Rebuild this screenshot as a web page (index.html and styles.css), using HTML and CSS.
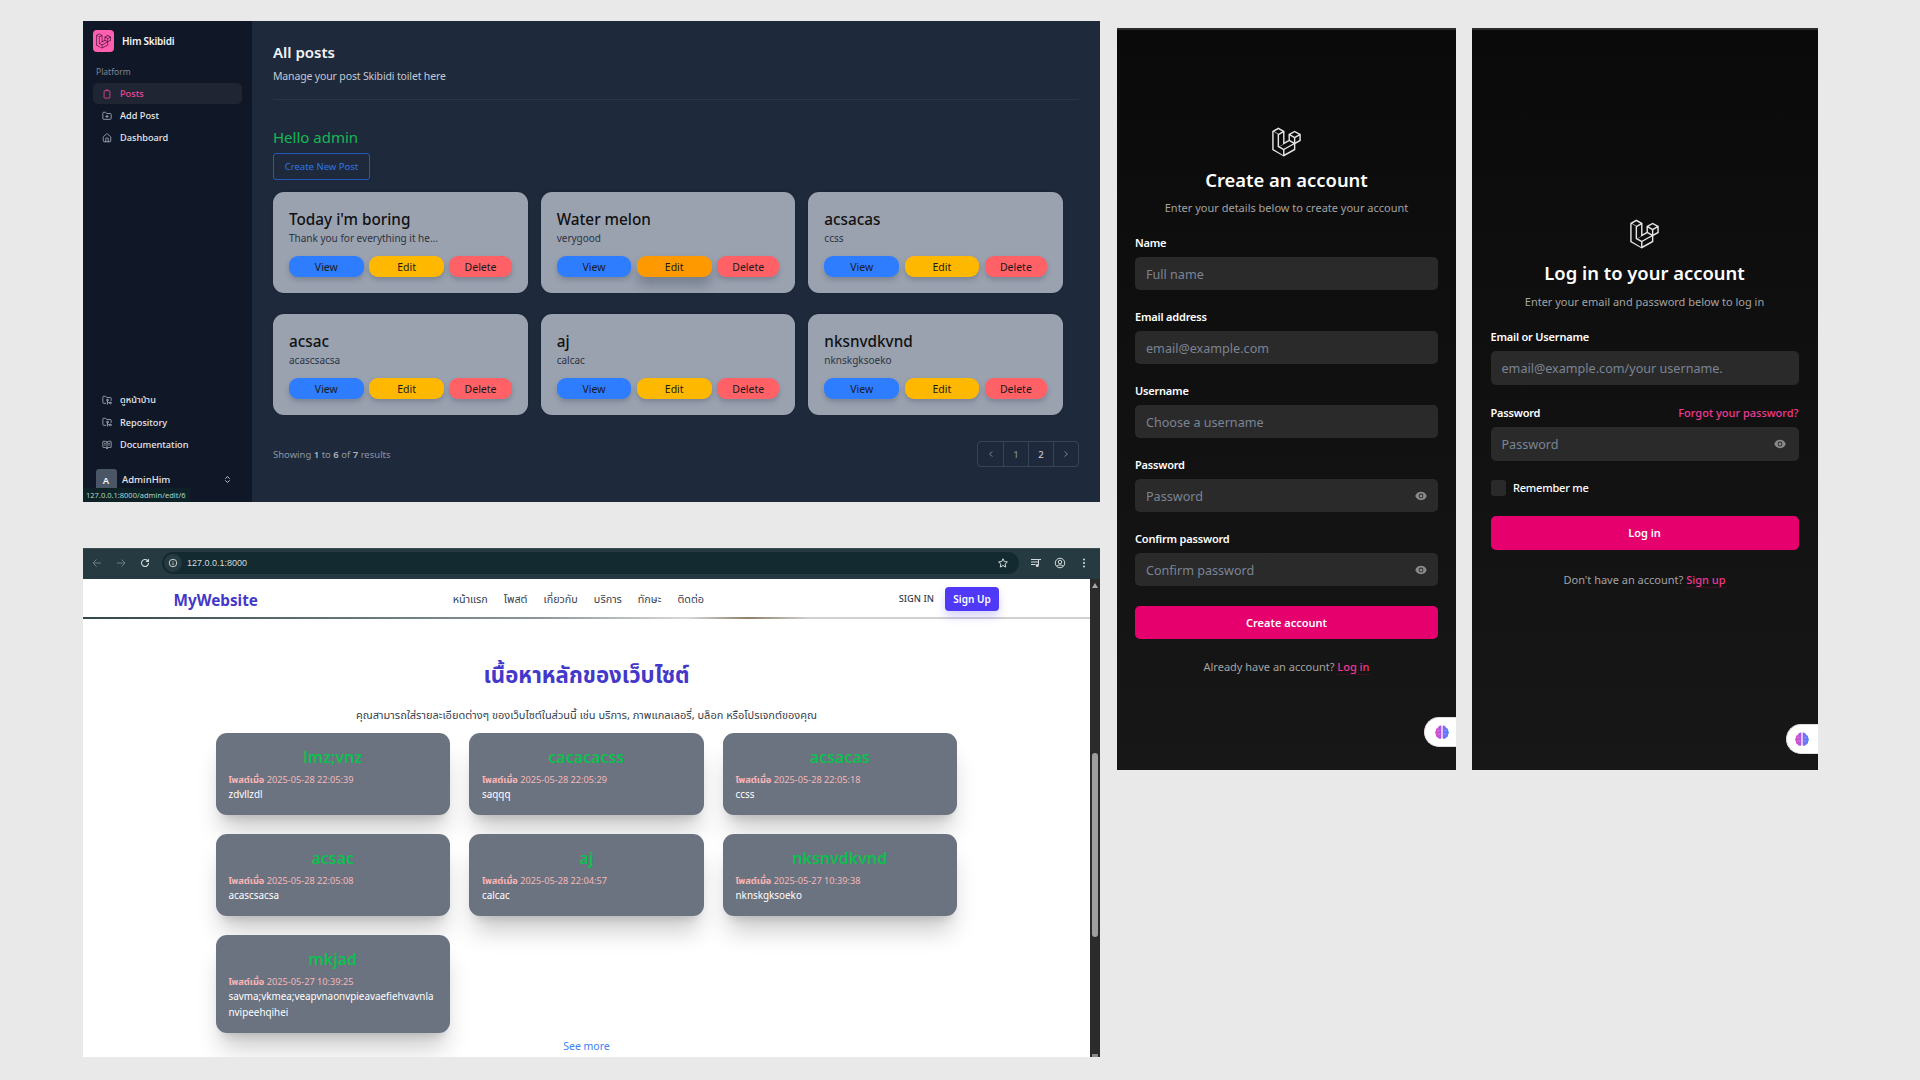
FILE: index.html
```html
<!DOCTYPE html>
<html lang="en">
<head>
<meta charset="utf-8">
<title>Project screenshots</title>
<link rel="stylesheet" href="styles.css">
</head>
<body>
<svg class="defs" aria-hidden="true">
  <symbol id="laravel" viewBox="0 0 40 42"><path fill="currentColor" fill-rule="evenodd" d="M17.2 5.633 8.6.855 0 5.633v26.51l16.2 9 16.2-9v-8.442l7.6-4.223V9.856l-8.6-4.777-8.6 4.777V18.3l-5.6 3.11V5.633ZM38 18.301l-5.6 3.11v-6.157l5.6-3.11V18.3Zm-1.06-7.856-5.54 3.078-5.54-3.079 5.54-3.078 5.54 3.079ZM24.8 18.3v-6.157l5.6 3.111v6.158L24.8 18.3Zm-1 1.732 5.54 3.078-13.14 7.302-5.54-3.078 13.14-7.3v-.002Zm-16.2 7.89 7.6 4.222V39.3L2 31v-24.2l5.6 3.111v18.011ZM8.6 9.3 3.06 6.222 8.6 3.143l5.54 3.08L8.6 9.3Zm1 1.732 5.6-3.111v16.1l-5.6 3.111V11.032ZM30.4 30.96l-13.2 7.34v-6.3l13.2-7.34v6.3Z"/></symbol>
  <symbol id="eye" viewBox="0 0 20 20"><path fill="currentColor" d="M10 12.5a2.5 2.5 0 1 0 0-5 2.5 2.5 0 0 0 0 5Z"/><path fill="currentColor" fill-rule="evenodd" d="M.664 10.59a1.651 1.651 0 0 1 0-1.186A10.004 10.004 0 0 1 10 3c4.257 0 7.893 2.66 9.336 6.41.147.381.146.804 0 1.186A10.004 10.004 0 0 1 10 17c-4.257 0-7.893-2.66-9.336-6.41ZM14 10a4 4 0 1 1-8 0 4 4 0 0 1 8 0Z"/></symbol>
  <symbol id="brain" viewBox="0 0 20 20"><defs><linearGradient id="brainfill" x1="0" y1="0" x2="1" y2="0"><stop offset="0" stop-color="#e84fc0"/><stop offset=".5" stop-color="#9a5cf0"/><stop offset="1" stop-color="#3f8cff"/></linearGradient></defs><path fill="url(#brainfill)" d="M9.2 2.2v15.6c-1.3 1.2-3.6.8-4.3-.9-1.8-.1-2.9-1.9-2.3-3.5C1 12.300 1 9.800 2.300 8.800 1.800 6.800 3 5 4.800 4.900 5.400 2.800 7.800 1.500 9.200 2.200ZM10.800 2.200c1.400-.7 3.800.6 4.400 2.700 1.800.1 3 1.900 2.500 3.900 1.300 1 1.300 3.500-.3 4.600.6 1.600-.5 3.400-2.300 3.500-.7 1.700-3 2.100-4.300.9Z"/><path d="M4.500 8h2.500M13 8h2.500M5 12.500h2.500M12.500 12.500H15" stroke="#fff" stroke-opacity=".45" stroke-width=".8" fill="none"/></symbol>
  <symbol id="i-posts" viewBox="0 0 24 24"><rect x="5" y="4" width="14" height="18" rx="2.500" fill="none" stroke="currentColor" stroke-width="2"/><path d="M9 2.500h6" fill="none" stroke="currentColor" stroke-width="2"/></symbol>
  <symbol id="i-add" viewBox="0 0 24 24"><g fill="none" stroke="currentColor" stroke-width="2" stroke-linecap="round" stroke-linejoin="round"><path d="M12 10v6"/><path d="M9 13h6"/><path d="M20 20a2 2 0 0 0 2-2V8a2 2 0 0 0-2-2h-7.900a2 2 0 0 1-1.690-.9L9.600 3.900A2 2 0 0 0 7.930 3H4a2 2 0 0 0-2 2v13a2 2 0 0 0 2 2Z"/></g></symbol>
  <symbol id="i-home" viewBox="0 0 24 24"><g fill="none" stroke="currentColor" stroke-width="2" stroke-linecap="round" stroke-linejoin="round"><path d="M15 21v-8a1 1 0 0 0-1-1h-4a1 1 0 0 0-1 1v8"/><path d="M3 10a2 2 0 0 1 .709-1.528l7-5.999a2 2 0 0 1 2.582 0l7 5.999A2 2 0 0 1 21 10v9a2 2 0 0 1-2 2H5a2 2 0 0 1-2-2z"/></g></symbol>
  <symbol id="i-repo" viewBox="0 0 24 24"><g fill="none" stroke="currentColor" stroke-width="2" stroke-linecap="round" stroke-linejoin="round"><path d="M9 20H4a2 2 0 0 1-2-2V5a2 2 0 0 1 2-2h3.900a2 2 0 0 1 1.690.9l.81 1.200a2 2 0 0 0 1.670.9H20a2 2 0 0 1 2 2v5"/><circle cx="13" cy="12" r="2"/><path d="M18 19c-2.800 0-5-2.200-5-5v8"/><circle cx="20" cy="19" r="2"/></g></symbol>
  <symbol id="i-book" viewBox="0 0 24 24"><g fill="none" stroke="currentColor" stroke-width="2" stroke-linecap="round" stroke-linejoin="round"><path d="M12 7v14"/><path d="M16 12h2"/><path d="M16 8h2"/><path d="M3 18a1 1 0 0 1-1-1V4a1 1 0 0 1 1-1h5a4 4 0 0 1 4 4 4 4 0 0 1 4-4h5a1 1 0 0 1 1 1v13a1 1 0 0 1-1 1h-6a3 3 0 0 0-3 3 3 3 0 0 0-3-3z"/><path d="M6 12h2"/><path d="M6 8h2"/></g></symbol>
  <symbol id="i-updown" viewBox="0 0 24 24"><g fill="none" stroke="currentColor" stroke-width="2.500" stroke-linecap="round" stroke-linejoin="round"><path d="m7 15 5 5 5-5"/><path d="m7 9 5-5 5 5"/></g></symbol>
  <symbol id="i-left" viewBox="0 0 24 24"><path d="M15 5l-7 7 7 7" fill="none" stroke="currentColor" stroke-width="3" stroke-linecap="round" stroke-linejoin="round"/></symbol>
  <symbol id="i-right" viewBox="0 0 24 24"><path d="M9 5l7 7-7 7" fill="none" stroke="currentColor" stroke-width="3" stroke-linecap="round" stroke-linejoin="round"/></symbol>
  <symbol id="c-back" viewBox="0 0 24 24"><path d="M20 12H5m6-7-7 7 7 7" fill="none" stroke="currentColor" stroke-width="2"/></symbol>
  <symbol id="c-fwd" viewBox="0 0 24 24"><path d="M4 12h15m-6-7 7 7-7 7" fill="none" stroke="currentColor" stroke-width="2"/></symbol>
  <symbol id="c-reload" viewBox="0 0 24 24"><path d="M19 12a7 7 0 1 1-2.100-5L19 9" fill="none" stroke="currentColor" stroke-width="2.200"/><path d="M20 3v7h-7z" fill="currentColor"/></symbol>
  <symbol id="c-info" viewBox="0 0 24 24"><circle cx="12" cy="12" r="9" fill="none" stroke="currentColor" stroke-width="2.200"/><path d="M12 11v6M12 7v2" fill="none" stroke="currentColor" stroke-width="2.200"/></symbol>
  <symbol id="c-star" viewBox="0 0 24 24"><path d="m12 3.500 2.600 5.700 6.200.7-4.600 4.200 1.300 6.100-5.500-3.100-5.500 3.100 1.300-6.100-4.600-4.200 6.200-.7Z" fill="none" stroke="currentColor" stroke-width="2" stroke-linejoin="round"/></symbol>
  <symbol id="c-queue" viewBox="0 0 24 24"><path d="M2 5h15M2 10h15M2 15h9M17 5h5M17 5v11" fill="none" stroke="currentColor" stroke-width="2"/><circle cx="14.500" cy="17" r="3" fill="currentColor"/></symbol>
  <symbol id="c-user" viewBox="0 0 24 24"><circle cx="12" cy="12" r="9.500" fill="none" stroke="currentColor" stroke-width="2"/><circle cx="12" cy="10" r="3.500" fill="none" stroke="currentColor" stroke-width="2"/><path d="M5.500 18.500c3-3.500 10-3.500 13 0" fill="none" stroke="currentColor" stroke-width="2"/></symbol>
  <symbol id="c-dots" viewBox="0 0 24 24"><circle cx="12" cy="5" r="2" fill="currentColor"/><circle cx="12" cy="12" r="2" fill="currentColor"/><circle cx="12" cy="19" r="2" fill="currentColor"/></symbol>
</svg>

<section class="window admin">
  <aside class="sidebar">
    <div class="brand">
      <span class="brand-mark"><svg class="brand-logo"><use href="#laravel"/></svg></span>
      <span class="brand-name">Him Skibidi</span>
    </div>
    <div class="side-label">Platform</div>
    <nav class="side-nav">
      <a class="side-item active"><svg class="side-icon"><use href="#i-posts"/></svg>Posts</a>
      <a class="side-item"><svg class="side-icon"><use href="#i-add"/></svg>Add Post</a>
      <a class="side-item"><svg class="side-icon"><use href="#i-home"/></svg>Dashboard</a>
    </nav>
    <nav class="side-nav side-bottom">
      <a class="side-item"><svg class="side-icon"><use href="#i-repo"/></svg>ดูหน้าบ้าน</a>
      <a class="side-item"><svg class="side-icon"><use href="#i-repo"/></svg>Repository</a>
      <a class="side-item"><svg class="side-icon"><use href="#i-book"/></svg>Documentation</a>
    </nav>
    <div class="side-user">
      <span class="avatar">A</span>
      <span class="user-name">AdminHim</span>
      <svg class="user-chev"><use href="#i-updown"/></svg>
    </div>
  </aside>
  <main class="admin-main">
    <h1 class="admin-title">All posts</h1>
    <p class="admin-sub">Manage your post Skibidi toilet here</p>
    <hr class="admin-rule">
    <div class="hello">Hello admin</div>
    <a class="create-btn">Create New Post</a>
    <div class="post-grid">
      <article class="post-card"><h2>Today i'm boring</h2><p>Thank you for everything it he...</p><div class="post-actions"><a class="btn view">View</a><a class="btn edit">Edit</a><a class="btn del">Delete</a></div></article>
      <article class="post-card"><h2>Water melon</h2><p>verygood</p><div class="post-actions"><a class="btn view">View</a><a class="btn edit hovered">Edit</a><a class="btn del">Delete</a></div></article>
      <article class="post-card"><h2>acsacas</h2><p>ccss</p><div class="post-actions"><a class="btn view">View</a><a class="btn edit">Edit</a><a class="btn del">Delete</a></div></article>
      <article class="post-card"><h2>acsac</h2><p>acascsacsa</p><div class="post-actions"><a class="btn view">View</a><a class="btn edit">Edit</a><a class="btn del">Delete</a></div></article>
      <article class="post-card"><h2>aj</h2><p>calcac</p><div class="post-actions"><a class="btn view">View</a><a class="btn edit">Edit</a><a class="btn del">Delete</a></div></article>
      <article class="post-card"><h2>nksnvdkvnd</h2><p>nknskgksoeko</p><div class="post-actions"><a class="btn view">View</a><a class="btn edit">Edit</a><a class="btn del">Delete</a></div></article>
    </div>
    <div class="pager-row">
      <span class="results">Showing <b>1</b> to <b>6</b> of <b>7</b> results</span>
      <div class="pager">
        <span class="page-cell"><svg class="page-arrow"><use href="#i-left"/></svg></span>
        <span class="page-cell">1</span>
        <span class="page-cell current">2</span>
        <span class="page-cell"><svg class="page-arrow"><use href="#i-right"/></svg></span>
      </div>
    </div>
  </main>
  <div class="status-bar">127.0.0.1:8000/admin/edit/6</div>
</section>

<section class="window browser">
  <header class="chrome">
    <svg class="chrome-icon dim"><use href="#c-back"/></svg>
    <svg class="chrome-icon dim"><use href="#c-fwd"/></svg>
    <svg class="chrome-icon"><use href="#c-reload"/></svg>
    <div class="omnibox">
      <span class="site-info"><svg class="info-icon"><use href="#c-info"/></svg></span>
      <span class="url">127.0.0.1:8000</span>
      <svg class="chrome-icon star"><use href="#c-star"/></svg>
    </div>
    <svg class="chrome-icon"><use href="#c-queue"/></svg>
    <svg class="chrome-icon"><use href="#c-user"/></svg>
    <svg class="chrome-icon"><use href="#c-dots"/></svg>
  </header>
  <div class="viewport">
    <div class="site">
      <nav class="site-nav">
        <a class="site-logo">MyWebsite</a>
        <div class="site-links"><a>หน้าแรก</a><a>โพสต์</a><a>เกี่ยวกับ</a><a>บริการ</a><a>ทักษะ</a><a>ติดต่อ</a></div>
        <div class="site-auth"><a class="signin">SIGN IN</a><a class="signup">Sign Up</a></div>
      </nav>
      <div class="site-main">
        <h1 class="site-title">เนื้อหาหลักของเว็บไซต์</h1>
        <p class="site-sub">คุณสามารถใส่รายละเอียดต่างๆ ของเว็บไซต์ในส่วนนี้ เช่น บริการ, ภาพแกลเลอรี่, บล็อก หรือโปรเจกต์ของคุณ</p>
        <div class="feed">
          <article class="feed-card"><h2>lmz;vnz</h2><div class="meta"><b>โพสต์เมื่อ</b> 2025-05-28 22:05:39</div><p>zdvllzdl</p></article>
          <article class="feed-card"><h2>cacacacss</h2><div class="meta"><b>โพสต์เมื่อ</b> 2025-05-28 22:05:29</div><p>saqqq</p></article>
          <article class="feed-card"><h2>acsacas</h2><div class="meta"><b>โพสต์เมื่อ</b> 2025-05-28 22:05:18</div><p>ccss</p></article>
          <article class="feed-card"><h2>acsac</h2><div class="meta"><b>โพสต์เมื่อ</b> 2025-05-28 22:05:08</div><p>acascsacsa</p></article>
          <article class="feed-card"><h2>aj</h2><div class="meta"><b>โพสต์เมื่อ</b> 2025-05-28 22:04:57</div><p>calcac</p></article>
          <article class="feed-card"><h2>nksnvdkvnd</h2><div class="meta"><b>โพสต์เมื่อ</b> 2025-05-27 10:39:38</div><p>nknskgksoeko</p></article>
          <article class="feed-card"><h2>mkjad</h2><div class="meta"><b>โพสต์เมื่อ</b> 2025-05-27 10:39:25</div><p>savma;vkmea;veapvnaonvpieavaefiehvavnlanvipeehqihei</p></article>
        </div>
        <a class="see-more">See more</a>
      </div>
    </div>
    <div class="scrollbar">
      <span class="scroll-up"></span>
      <span class="scroll-thumb"></span>
      <span class="scroll-down"></span>
    </div>
  </div>
</section>

<section class="window auth register">
  <svg class="auth-logo"><use href="#laravel"/></svg>
  <h1 class="auth-title">Create an account</h1>
  <p class="auth-sub">Enter your details below to create your account</p>
  <div class="auth-form">
    <div class="field"><span class="field-label">Name</span><div class="field-input">Full name</div></div>
    <div class="field"><span class="field-label">Email address</span><div class="field-input">email@example.com</div></div>
    <div class="field"><span class="field-label">Username</span><div class="field-input">Choose a username</div></div>
    <div class="field"><span class="field-label">Password</span><div class="field-input">Password<svg class="eye"><use href="#eye"/></svg></div></div>
    <div class="field"><span class="field-label">Confirm password</span><div class="field-input">Confirm password<svg class="eye"><use href="#eye"/></svg></div></div>
    <a class="auth-btn">Create account</a>
  </div>
  <p class="auth-alt">Already have an account? <a>Log in</a></p>
  <span class="brain-tab"><svg class="brain"><use href="#brain"/></svg></span>
</section>

<section class="window auth login">
  <svg class="auth-logo"><use href="#laravel"/></svg>
  <h1 class="auth-title">Log in to your account</h1>
  <p class="auth-sub">Enter your email and password below to log in</p>
  <div class="auth-form">
    <div class="field"><span class="field-label">Email or Username</span><div class="field-input">email@example.com/your username.</div></div>
    <div class="field"><div class="field-head"><span class="field-label">Password</span><a class="forgot">Forgot your password?</a></div><div class="field-input">Password<svg class="eye"><use href="#eye"/></svg></div></div>
    <label class="remember"><span class="check"></span>Remember me</label>
    <a class="auth-btn">Log in</a>
  </div>
  <p class="auth-alt">Don't have an account? <a>Sign up</a></p>
  <span class="brain-tab"><svg class="brain"><use href="#brain"/></svg></span>
</section>
</body>
</html>
```

FILE: styles.css
```css
* { box-sizing: border-box; }
html, body { margin: 0; height: 100%; }
body {
  position: relative;
  width: 1920px;
  height: 1080px;
  overflow: hidden;
  background: #e9e9e9;
  font-family: "Noto Sans", "Noto Sans Thai", "Open Sans", sans-serif;
}
h1, h2, p { margin: 0; }
.defs { position: absolute; width: 0; height: 0; }

/* free canvas of four screenshots */
.window { position: absolute; overflow: hidden; }
.admin { left: 83px; top: 21px; width: 1017px; height: 481px; display: flex; background: #1e293b; }
.browser { left: 83px; top: 548px; width: 1017px; height: 509px; display: flex; flex-direction: column; background: #fff; }
.register { left: 1117px; top: 28px; width: 339px; height: 742px; padding: 97px 18px 0; }
.login { left: 1472px; top: 28px; width: 346px; height: 742px; padding: 189px 19.500px 0 18.500px; }

/* admin sidebar */
.sidebar { width: 168.500px; flex: none; display: flex; flex-direction: column; padding: 9px 10px 0; background: #101828; }
.brand { display: flex; align-items: center; gap: 8px; height: 22px; }
.brand-mark { width: 21px; height: 22px; border-radius: 4px; background: #ff5fb1; display: flex; align-items: center; justify-content: center; color: #5b1a45; }
.brand-logo { width: 15px; height: 16px; }
.brand-name { font-size: 10px; font-weight: 600; letter-spacing: -.25px; color: #f3f4f6; }
.side-label { margin: 13px 0 4px 3px; height: 14px; line-height: 14px; font-size: 8.500px; color: #7c8594; }
.side-nav { display: flex; flex-direction: column; gap: 1px; }
.side-item { height: 21px; display: flex; align-items: center; gap: 8px; padding-left: 9px; border-radius: 5px; font-size: 9.200px; font-weight: 500; color: #e5e7eb; }
.side-item.active { background: #1f2533; color: #ec4899; }
.side-icon { width: 10px; height: 10px; flex: none; color: #aab0ba; }
.active .side-icon { color: #ec4899; }
.side-bottom { margin-top: auto; gap: 1.500px; }
.side-user { margin-top: 14px; height: 33px; flex: none; display: flex; align-items: flex-start; padding-left: 2.500px; }
.avatar { width: 21px; height: 22px; border-radius: 3px; background: #4a5565; color: #f3f4f6; font-size: 9.500px; font-weight: 600; display: flex; align-items: center; justify-content: center; }
.user-name { margin-left: 5.500px; line-height: 22px; font-size: 9.500px; font-weight: 500; color: #e5e7eb; }
.user-chev { width: 9px; height: 9px; margin: 6px 9.500px 0 auto; color: #cbd0d8; }
.status-bar { position: absolute; left: 0; bottom: 0; width: 106.500px; height: 14px; padding-left: 3px; background: #0d2127; color: #a9d8cf; font-size: 7.500px; line-height: 14px; white-space: nowrap; }

/* admin main */
.admin-main { flex: 1; min-width: 0; padding: 20px 21px 0 21.500px; }
.admin-title { font-size: 15px; line-height: 22px; font-weight: 600; color: #f3f4f6; }
.admin-sub { margin-top: 5px; font-size: 10.500px; line-height: 16px; letter-spacing: -.15px; color: #c3c9d3; }
.admin-rule { margin: 15px 0 0; border: 0; border-top: 1px solid #2b3749; }
.hello { margin-top: 26px; font-size: 15px; line-height: 22px; color: #14b855; }
.create-btn { display: inline-flex; align-items: center; justify-content: center; margin-top: 5px; width: 97px; height: 27px; border: 1px solid #2459b8; border-radius: 3px; color: #2f74e8; font-size: 9.500px; }
.post-grid { margin-top: 12px; padding-right: 16px; display: grid; grid-template-columns: repeat(3, 1fr); gap: 21px 13px; }
.post-card { height: 101px; padding: 16px 16px 16px; border-radius: 11px; background: #9aa2b0; box-shadow: 0 -1px 3px rgba(0,0,0,.12); }
.post-card h2 { margin-bottom: 1px; font-size: 15.300px; line-height: 22px; font-weight: 500; color: #111; }
.post-card p { margin-bottom: 11px; font-size: 10px; line-height: 14px; color: #2d3340; }
.post-actions { display: grid; grid-template-columns: 1.200fr 1.200fr 1fr; gap: 5.500px; }
.btn { height: 21px; display: flex; align-items: center; justify-content: center; border-radius: 9px; font-size: 10.500px; color: #1a1a1a; box-shadow: 0 3px 5px rgba(40,50,70,.25); }
.view { background: #2e7dff; }
.edit { background: #ffb800; }
.del { background: #ff6166; }
.edit.hovered { background: #ff9900; box-shadow: 0 8px 12px rgba(40,50,70,.3); }
.pager-row { margin-top: 26px; display: flex; align-items: center; justify-content: space-between; }
.results { font-size: 9.500px; color: #8d96a5; }
.results b { font-weight: 600; color: #aab2be; }
.pager { display: flex; height: 26px; border: 1px solid #36445a; border-radius: 4px; }
.page-cell { width: 25px; display: flex; align-items: center; justify-content: center; border-left: 1px solid #36445a; font-size: 9.500px; font-weight: 500; color: #7e899a; }
.page-cell:first-child { border-left: 0; }
.page-cell.current { color: #c7ced8; }
.page-arrow { width: 8px; height: 8px; }

/* browser chrome */
.chrome { height: 31px; flex: none; display: flex; align-items: center; padding: 0 4px 2px 2px; background: #263b41; border-top: 1px solid #3d4c50; color: #d5dbdc; }
.chrome-icon { width: 12px; height: 12px; flex: none; margin: 0 6px; }
.chrome-icon.dim { color: #6d7d81; }
.omnibox { flex: 1; height: 22px; margin: 0 5px 0 5px; display: flex; align-items: center; padding-left: 2px; border-radius: 11px; background: #132a30; }
.site-info { width: 18px; height: 18px; border-radius: 50%; background: #263b41; display: flex; align-items: center; justify-content: center; }
.info-icon { width: 10px; height: 10px; }
.url { margin-left: 5px; font-family: "Liberation Sans", sans-serif; font-size: 9px; color: #d5dbdc; }
.star { margin-left: auto; margin-right: 10px; }

.viewport { flex: 1; min-height: 0; display: flex; overflow: hidden; }
.site { flex: 1; min-width: 0; }
.site-nav { height: 40px; display: flex; align-items: center; justify-content: space-between; padding: 3px 91px 0 90.500px; border-bottom: 2px solid; border-image: linear-gradient(90deg, #33464d 0%, #8b969a 45%, #d8d8d8 60%, #8f7f6a 66%, #d0d0d0 72%, #d0d0d0 100%) 1; }
.site-logo { font-size: 15.300px; font-weight: 700; color: #4338ca; }
.site-links { display: flex; gap: 16px; }
.site-links a { font-size: 10.800px; color: #374151; }
.site-auth { display: flex; align-items: center; gap: 11px; margin-top: -2px; }
.signin { font-size: 9.300px; font-weight: 500; color: #374151; }
.signup { width: 54px; height: 24px; display: flex; align-items: center; justify-content: center; border-radius: 4px; background: #4f39f6; color: #fff; font-size: 10px; font-weight: 600; box-shadow: 0 6px 10px rgba(79,57,246,.22); }
.site-main { padding-top: 41px; text-align: center; }
.site-title { font-size: 22.200px; line-height: 30px; font-weight: 700; color: #4338ca; }
.site-sub { margin-top: 17px; font-size: 11px; line-height: 16px; color: #374151; }
.feed { width: 742px; margin: 10px auto 0; display: grid; grid-template-columns: repeat(3, 234.500px); gap: 19px; align-items: start; text-align: left; }
.feed-card { min-height: 82px; padding: 13px 13px 13px; border-radius: 11px; background: #6b7280; color: #fff; box-shadow: 0 20px 25px -5px rgba(0,0,0,.2), 0 8px 10px -6px rgba(0,0,0,.15); }
.feed-card h2 { font-size: 16px; line-height: 22px; font-weight: 600; text-align: center; color: #0cc04f; }
.meta { margin-top: 5px; font-size: 9.200px; line-height: 14px; color: #f5b8b8; }
.meta b { font-weight: 700; color: #fbb6b6; }
.feed-card p { margin-top: -1px; font-size: 9.900px; line-height: 16px; word-break: break-all; color: #fff; }
.see-more { display: block; margin-top: 5px; font-size: 10.500px; line-height: 16px; color: #3b82f6; }
.scrollbar { position: relative; width: 10px; flex: none; background: #2b2b2b; }
.scroll-up { position: absolute; left: 2px; top: 4px; border: 3px solid transparent; border-top: 0; border-bottom: 5px solid #a8a8a8; }
.scroll-thumb { position: absolute; left: 2px; top: 174px; width: 6px; height: 184px; border-radius: 3px; background: #9e9e9e; }
.scroll-down { position: absolute; left: 2px; bottom: 0; width: 6px; height: 3px; background: #8a8a8a; }

/* auth screens */
.auth { display: flex; flex-direction: column; align-items: center; background: linear-gradient(180deg, #0a0a0a, #171717); border-top: 2px solid #2c2c2c; color: #fff; }
.auth-logo { width: 29px; height: 30px; flex: none; color: #e5e5e5; }
.auth-title { margin-top: 9px; font-size: 18.400px; line-height: 28px; font-weight: 600; color: #fff; }
.login .auth-title { margin-top: 10px; }
.auth-sub { margin-top: 6px; font-size: 11px; line-height: 16px; color: #a3a3a3; }
.login .auth-sub { margin-top: 7px; }
.auth-form { width: 100%; margin-top: 20px; display: flex; flex-direction: column; gap: 20px; }
.field { display: flex; flex-direction: column; gap: 7px; }
.field-head { display: flex; align-items: flex-end; justify-content: space-between; margin-top: 1px; }
.field-label { font-size: 11px; line-height: 14px; font-weight: 600; letter-spacing: -.2px; color: #fff; }
.field-input { height: 33px; display: flex; align-items: center; justify-content: space-between; padding: 2px 11px 0; border-radius: 5px; background: #2a2a2a; font-size: 12.600px; color: #7b8494; }
.login .field-input { height: 34px; padding-top: 1px; }
.eye { width: 12px; height: 12px; margin: -2px 0 0; color: #8a8a8a; }
.login .eye { margin: -1px 2px 0 0; }
.auth-btn { height: 33px; display: flex; align-items: center; justify-content: center; border-radius: 5px; background: #e6006e; color: #fff; font-size: 11px; font-weight: 600; }
.login .auth-btn { height: 34px; }
.auth-alt { margin-top: 20px; font-size: 11px; line-height: 16px; color: #a3a3a3; }
.login .auth-alt { margin-top: 22px; }
.auth-alt a { color: #f0388f; font-weight: 500; border-bottom: 1px solid #3a1027; }
.forgot { font-size: 11px; line-height: 14px; font-weight: 500; color: #ee3a92; }
.remember { display: flex; align-items: center; gap: 7px; height: 16px; margin-top: -1.500px; font-size: 11px; font-weight: 500; letter-spacing: -.2px; color: #fff; }
.check { width: 15.500px; height: 16px; border-radius: 3px; background: #2a2a2a; }
.brain-tab { position: absolute; right: 0; display: flex; align-items: center; padding-left: 7px; height: 30px; width: 32px; border-radius: 15px 0 0 15px; background: #fff; border: 1px solid #ddd; border-right: 0; }
.register .brain-tab { top: 687px; padding-left: 9px; }
.login .brain-tab { top: 694px; }
.brain { width: 16px; height: 16px; }
```
